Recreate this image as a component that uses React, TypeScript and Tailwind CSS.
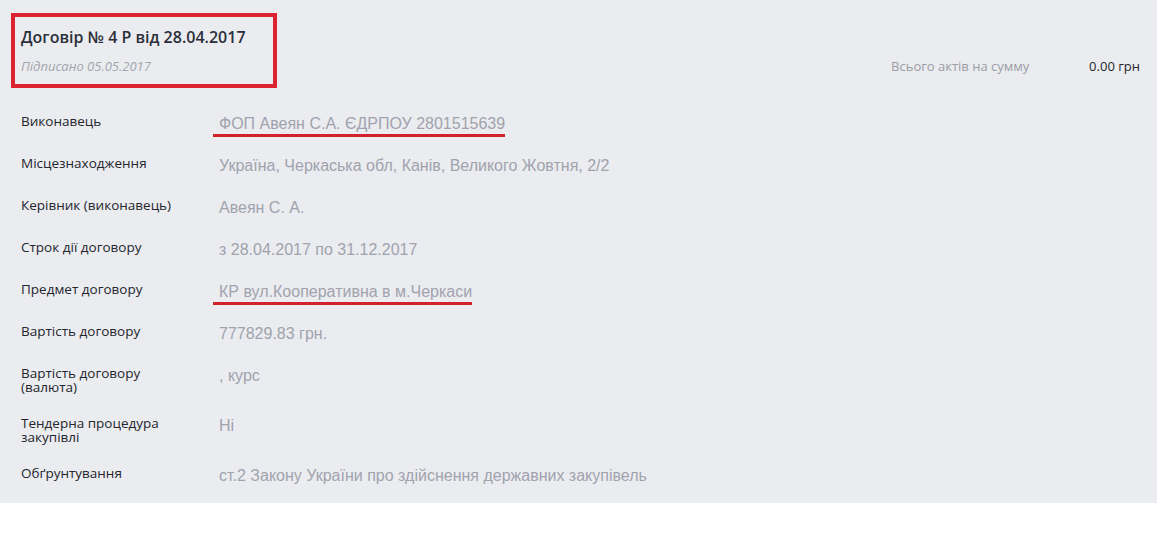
import React from "react"

interface Row {
  label: string
  value: string
  mark?: boolean
}

const rows: Row[] = [
  { label: "Виконавець", value: "ФОП Авеян С.А. ЄДРПОУ 2801515639", mark: true },
  { label: "Місцезнаходження", value: "Україна, Черкаська обл, Канів, Великого Жовтня, 2/2" },
  { label: "Керівник (виконавець)", value: "Авеян С. А." },
  { label: "Строк дії договору", value: "з 28.04.2017 по 31.12.2017" },
  { label: "Предмет договору", value: "КР вул.Кооперативна в м.Черкаси", mark: true },
  { label: "Вартість договору", value: "777829.83 грн." },
  { label: "Вартість договору (валюта)", value: ", курс" },
  { label: "Тендерна процедура закупівлі", value: "Ні" },
  { label: "Обґрунтування", value: "ст.2 Закону України про здійснення державних закупівель" },
]

export default function App() {
  return (
    <div className="w-[1157px] h-[533px] bg-white" style={{ fontFamily: "'Open Sans', sans-serif" }}>
      <div className="bg-[#ebecf0] px-[21px] pt-[13px] pb-[6px]">
        {/* header */}
        <div className="flex items-start justify-between">
          <div className="-ml-[10px] w-[266px] h-[75px] border-4 border-[#dc2430] pl-[6px] pt-[8px]">
            <h1 className="text-[16px] font-semibold text-[#2b2f3a] leading-[24px]">Договір № 4 Р від 28.04.2017</h1>
            <p className="mt-[9px] text-[13px] italic text-[#a3a6ae] leading-[16px]">Підписано 05.05.2017</p>
          </div>
          <div className="flex items-center pt-[44px] mr-[-4px]">
            <span className="text-[13px] text-[#9a9ca3] w-[198px]">Всього актів на сумму</span>
            <span className="text-[13px] text-[#23262d]">0.00 грн</span>
          </div>
        </div>

        {/* details */}
        <div className="mt-[15px]">
          {rows.map((r) => (
            <div key={r.label} className="flex items-start py-[11px]">
              <div className="w-[198px] pr-[40px] text-[13.5px] leading-[14px] text-[#23262d]">{r.label}</div>
              <div
                className="h-[20px] text-[16px] leading-[20px] text-[#a0a3ad]"
                style={{ fontFamily: "'Liberation Sans', Arial, sans-serif" }}
              >
                {r.mark ? (
                  <span className="relative inline-block">
                    {r.value}
                    <span className="absolute left-[-6px] right-0 top-[20px] h-[3px] bg-[#d3222d]" />
                  </span>
                ) : (
                  r.value
                )}
              </div>
            </div>
          ))}
        </div>
      </div>
    </div>
  )
}
